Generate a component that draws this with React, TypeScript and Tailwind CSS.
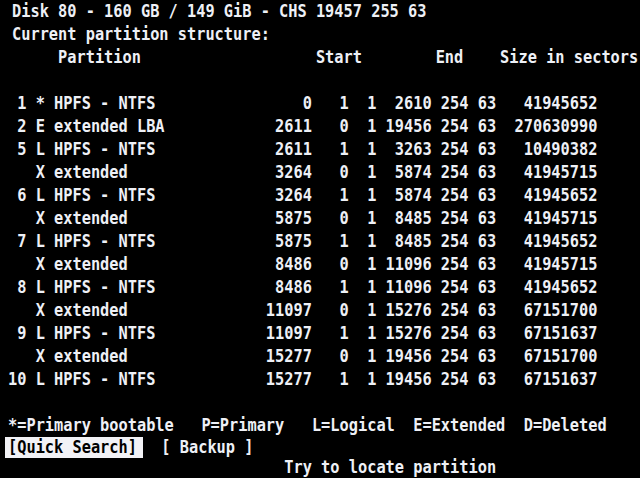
import React from "react";

type Row = [string, string, string, number, number, number, number, number, number, number];

const rows: Row[] = [
  ["1", "*", "HPFS - NTFS", 0, 1, 1, 2610, 254, 63, 41945652],
  ["2", "E", "extended LBA", 2611, 0, 1, 19456, 254, 63, 270630990],
  ["5", "L", "HPFS - NTFS", 2611, 1, 1, 3263, 254, 63, 10490382],
  ["", "X", "extended", 3264, 0, 1, 5874, 254, 63, 41945715],
  ["6", "L", "HPFS - NTFS", 3264, 1, 1, 5874, 254, 63, 41945652],
  ["", "X", "extended", 5875, 0, 1, 8485, 254, 63, 41945715],
  ["7", "L", "HPFS - NTFS", 5875, 1, 1, 8485, 254, 63, 41945652],
  ["", "X", "extended", 8486, 0, 1, 11096, 254, 63, 41945715],
  ["8", "L", "HPFS - NTFS", 8486, 1, 1, 11096, 254, 63, 41945652],
  ["", "X", "extended", 11097, 0, 1, 15276, 254, 63, 67151700],
  ["9", "L", "HPFS - NTFS", 11097, 1, 1, 15276, 254, 63, 67151637],
  ["", "X", "extended", 15277, 0, 1, 19456, 254, 63, 67151700],
  ["10", "L", "HPFS - NTFS", 15277, 1, 1, 19456, 254, 63, 67151637],
];

function fmt(r: Row): string {
  const [n, t, name, c, h, s, ec, eh, es, size] = r;
  const prefix = (n.padStart(2, " ") + " " + t + " " + name).padEnd(28, " ");
  return (
    prefix +
    String(c).padStart(5, " ") +
    " " +
    String(h).padStart(3, " ") +
    " " +
    String(s).padStart(2, " ") +
    " " +
    String(ec).padStart(5, " ") +
    " " +
    String(eh).padStart(3, " ") +
    " " +
    String(es).padStart(2, " ") +
    " " +
    String(size).padStart(10, " ")
  );
}

function Line({ children, top }: { children?: React.ReactNode; top?: boolean }) {
  return (
    <div className={top ? "h-[23px] leading-[23px] whitespace-pre pl-[4px]" : "h-[23px] leading-[23px] whitespace-pre"}>
      <span className="inline-block scale-y-[1.2] leading-[17px]">{children}</span>
    </div>
  );
}

export default function App() {
  const header =
    "     Partition".padEnd(33, " ") +
    "Start".padEnd(13, " ") +
    "End".padEnd(7, " ") +
    "Size in sectors";
  return (
    <div
      className="w-[640px] h-[478px] overflow-hidden bg-black text-[#eef0f6] font-bold text-[15.3px] pl-[8px]"
      style={{ fontFamily: '"DejaVu Sans Mono", "Liberation Mono", monospace' }}
    >
      <Line top>Disk 80 - 160 GB / 149 GiB - CHS 19457 255 63</Line>
      <Line top>Current partition structure:</Line>
      <Line top>{header}</Line>
      <Line> </Line>
      {rows.map((r, i) => (
        <Line key={i}>{fmt(r)}</Line>
      ))}
      <Line> </Line>
      <Line>*=Primary bootable   P=Primary   L=Logical  E=Extended  D=Deleted</Line>
      <div className="h-[21px] leading-[21px] whitespace-pre">
        <span className="inline-block bg-[#f2f2f6] text-black -ml-[3px] pl-[3px] pr-[6px]">
          <span className="inline-block scale-y-[1.2] leading-[17px]">[Quick Search]</span>
        </span>
        <span className="inline-block scale-y-[1.2] leading-[17px]">  [ Backup ]</span>
      </div>
      <div className="h-[18px] leading-[18px] whitespace-pre">
        <span className="inline-block scale-y-[1.2] leading-[16px]">{"                              Try to locate partition"}</span>
      </div>
    </div>
  );
}
